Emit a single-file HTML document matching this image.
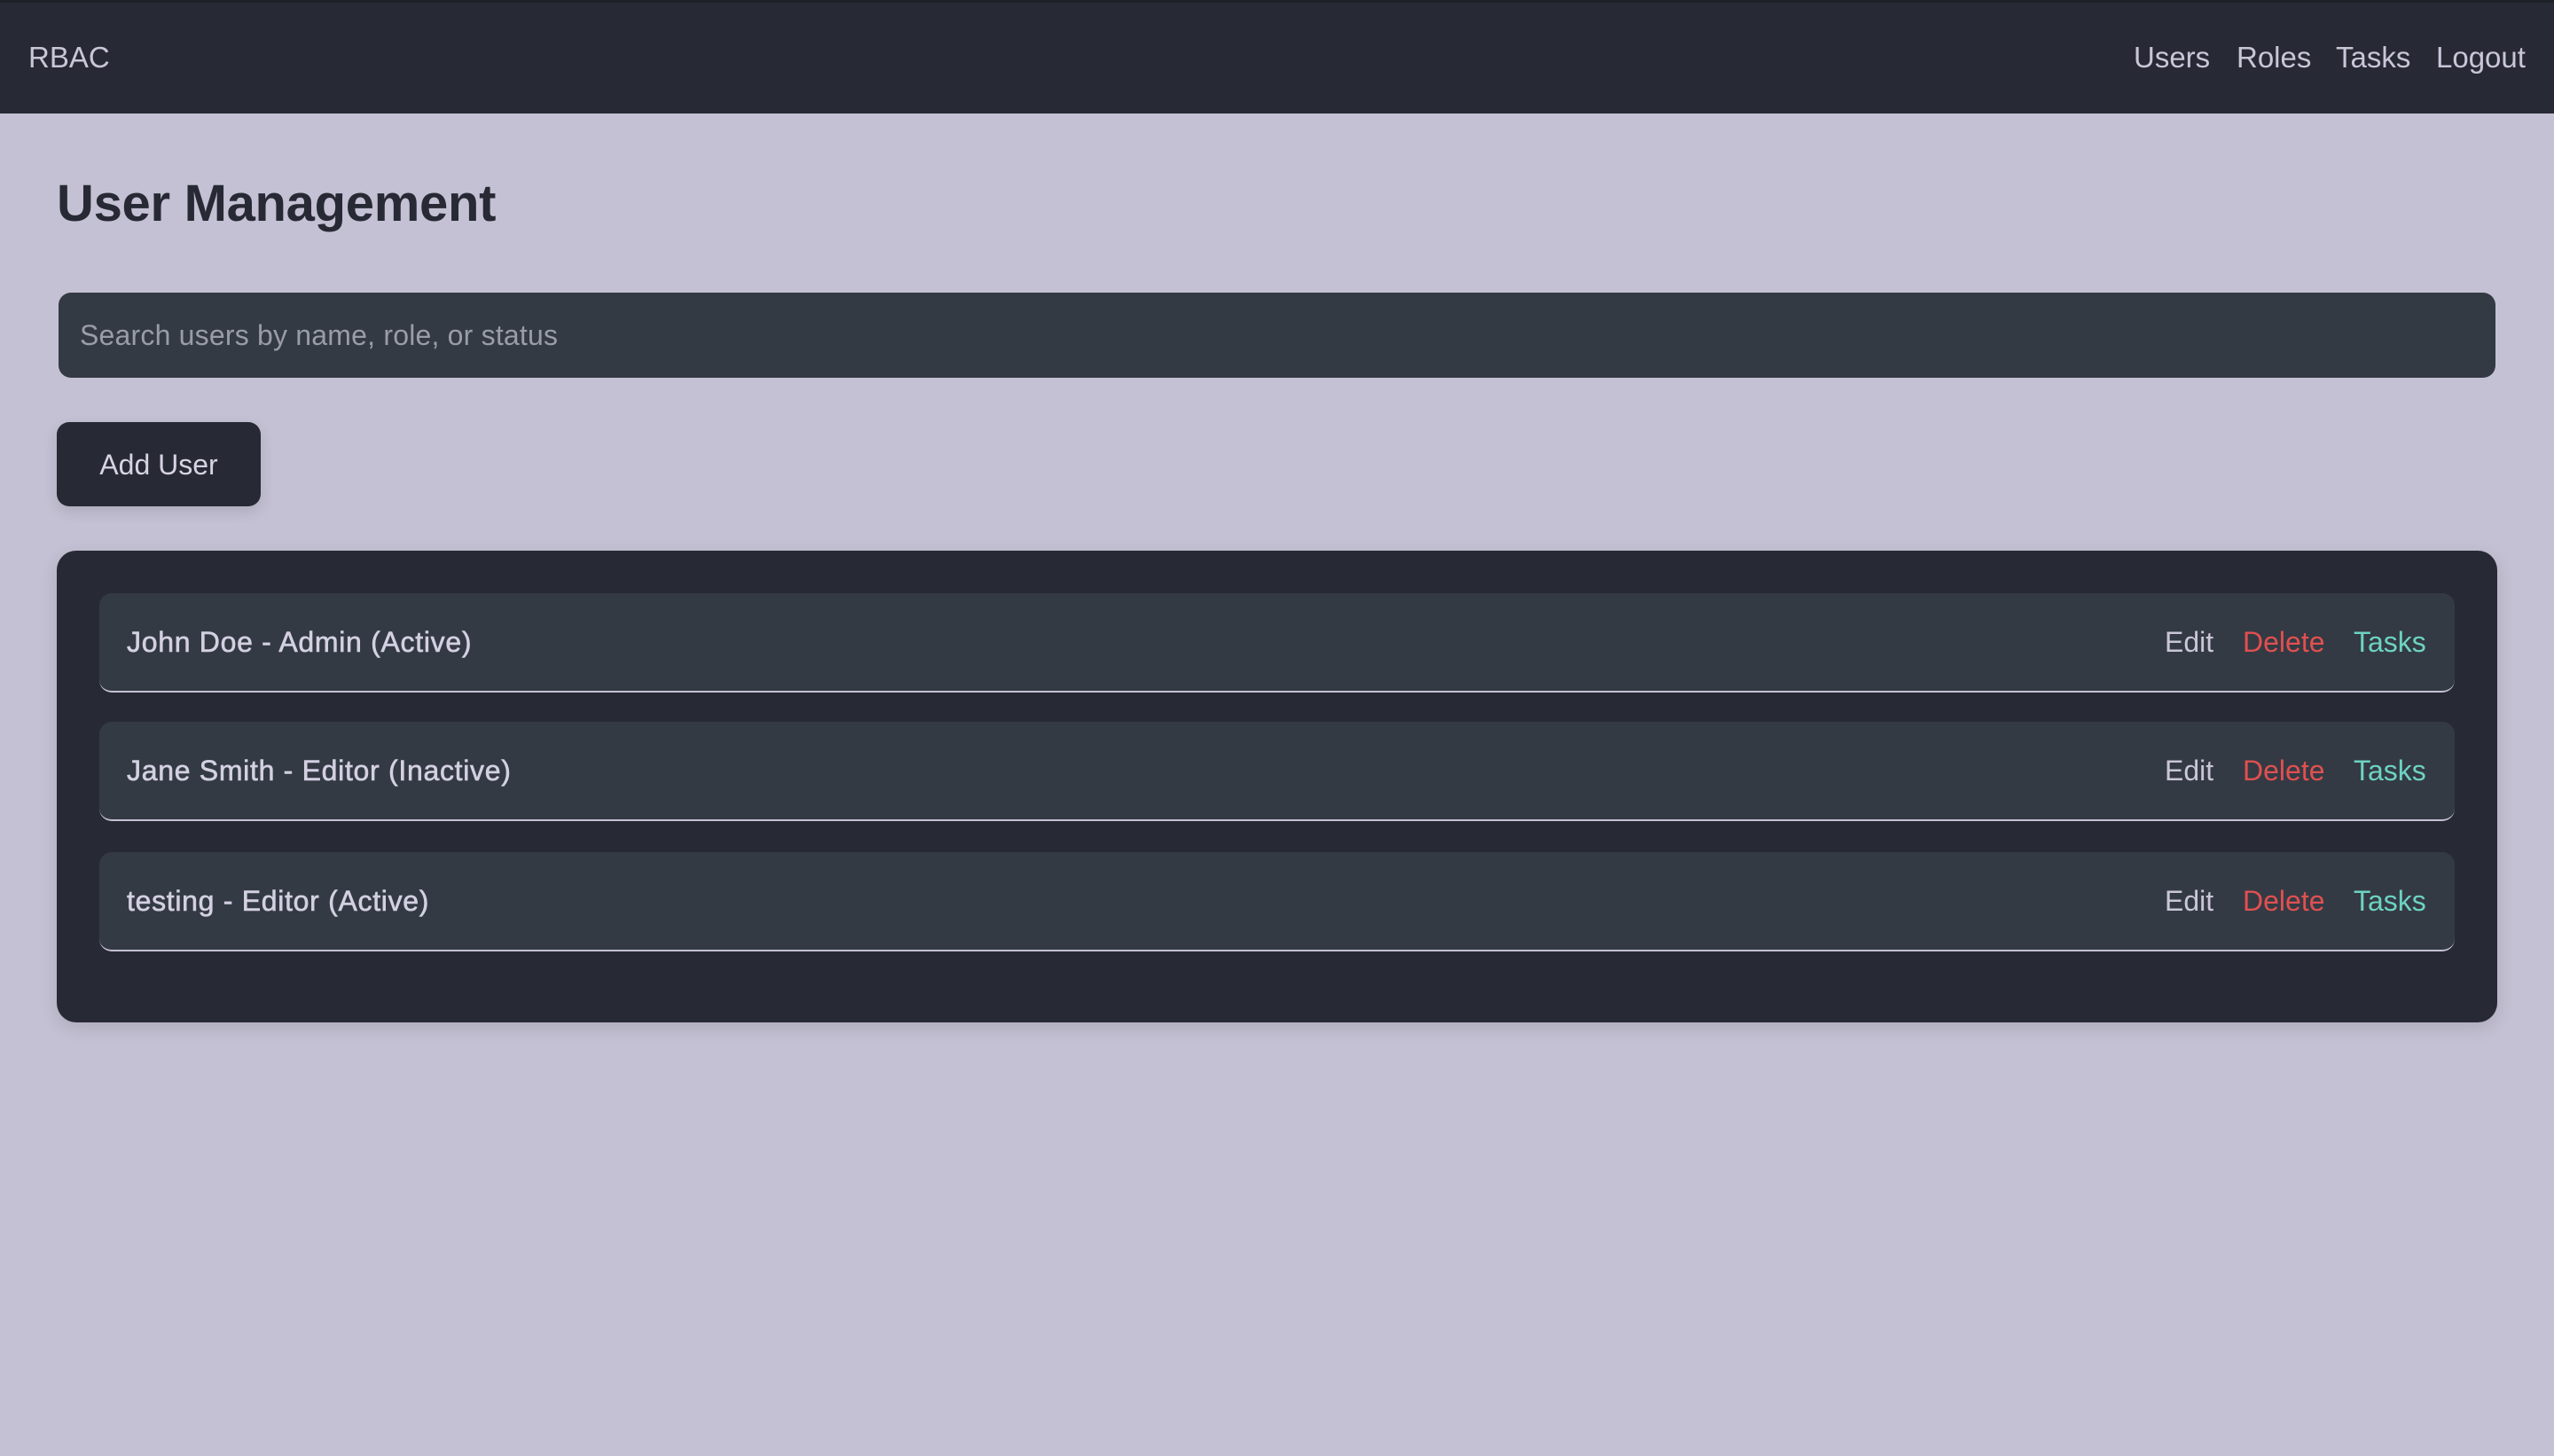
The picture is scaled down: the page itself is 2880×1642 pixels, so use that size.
<!DOCTYPE html>
<html><head><meta charset="utf-8"><style>
*{margin:0;padding:0;box-sizing:border-box}
html,body{width:2880px;height:1642px;overflow:hidden;background:#c4c1d4;font-family:"Liberation Sans",Arial,sans-serif}
.nav{position:absolute;left:0;top:0;width:2880px;height:128px;background:#272a35;border-top:3px solid #1e2028}
.nav span{position:absolute;top:42px;font-size:33px;line-height:40px;color:#c9c6d8}
h1{position:absolute;left:64px;top:195px;font-size:58px;line-height:70px;font-weight:bold;color:#272a35;letter-spacing:-0.3px}
.search{position:absolute;left:66px;top:330px;width:2748px;height:96px;background:#343a44;border-radius:14px;color:#9a9ca8;font-size:32px;line-height:96px;padding-left:24px;letter-spacing:0.2px}
.btn{position:absolute;left:64px;top:476px;width:230px;height:95px;background:#272a35;border-radius:14px;color:#d6d3e3;font-size:32px;line-height:97px;text-align:center;box-shadow:0 6px 16px rgba(0,0,0,.12)}
.panel{position:absolute;left:64px;top:621px;width:2752px;height:532px;background:#272a35;border-radius:22px;box-shadow:0 6px 20px rgba(0,0,0,.12)}
.row{position:absolute;left:48px;width:2656px;height:112px;background:#343a44;border-radius:14px;border-bottom:2px solid #c4c1d4}
.row .n{position:absolute;left:31px;top:0;line-height:110px;font-size:32px;color:#d3d0e2;letter-spacing:0.7px;-webkit-text-stroke:0.6px #d3d0e2}
.row .a{position:absolute;top:0;line-height:110px;font-size:32px}
</style></head><body>
<div class="nav">
<span style="left:32px">RBAC</span>
<span style="left:2406px">Users</span>
<span style="left:2522px">Roles</span>
<span style="left:2634px">Tasks</span>
<span style="left:2747px">Logout</span>
</div>
<h1>User Management</h1>
<div class="search">Search users by name, role, or status</div>
<div class="btn">Add User</div>
<div class="panel">
<div class="row" style="top:48px"><span class="n">John Doe - Admin (Active)</span><span class="a" style="left:2329px;color:#c9c6d8">Edit</span><span class="a" style="left:2417px;color:#e05050">Delete</span><span class="a" style="left:2542px;color:#6dd3c2">Tasks</span></div>
<div class="row" style="top:193px"><span class="n">Jane Smith - Editor (Inactive)</span><span class="a" style="left:2329px;color:#c9c6d8">Edit</span><span class="a" style="left:2417px;color:#e05050">Delete</span><span class="a" style="left:2542px;color:#6dd3c2">Tasks</span></div>
<div class="row" style="top:340px"><span class="n">testing - Editor (Active)</span><span class="a" style="left:2329px;color:#c9c6d8">Edit</span><span class="a" style="left:2417px;color:#e05050">Delete</span><span class="a" style="left:2542px;color:#6dd3c2">Tasks</span></div>
</div>
</body></html>
